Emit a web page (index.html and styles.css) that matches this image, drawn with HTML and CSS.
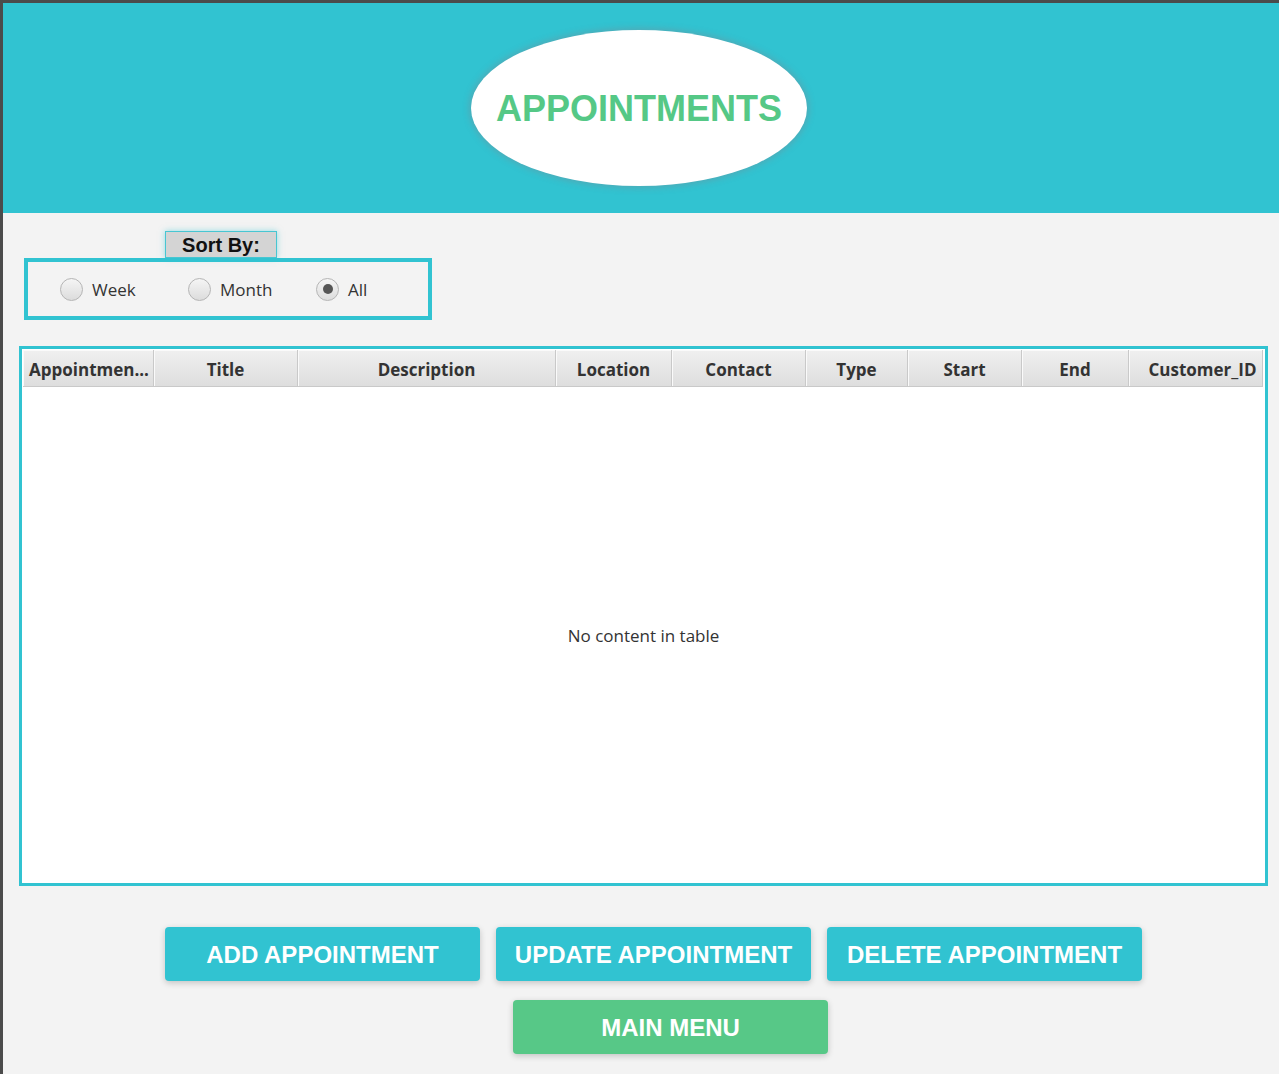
FILE: index.html
```html
<!DOCTYPE html>
<html>
<head>
<meta charset="utf-8">
<link rel="stylesheet" href="styles.css">
</head>
<body>
<div class="frame">
  <header class="header">
    <div class="oval"><h1 class="title">APPOINTMENTS</h1></div>
  </header>
  <section class="sort">
    <div class="sort-label">Sort By:</div>
    <div class="sort-box">
      <label class="radio"><span class="dot"></span><span>Week</span></label>
      <label class="radio"><span class="dot"></span><span>Month</span></label>
      <label class="radio"><span class="dot on"></span><span>All</span></label>
    </div>
  </section>
  <section class="table">
    <div class="thead">
      <div class="th c1">Appointmen...</div>
      <div class="th c2">Title</div>
      <div class="th c3">Description</div>
      <div class="th c4">Location</div>
      <div class="th c5">Contact</div>
      <div class="th c6">Type</div>
      <div class="th c7">Start</div>
      <div class="th c8">End</div>
      <div class="th c9">Customer_ID</div>
    </div>
    <div class="tbody">No content in table</div>
  </section>
  <section class="actions">
    <div class="row">
      <button class="btn teal">ADD APPOINTMENT</button>
      <button class="btn teal">UPDATE APPOINTMENT</button>
      <button class="btn teal">DELETE APPOINTMENT</button>
    </div>
    <div class="row row2">
      <button class="btn green">MAIN MENU</button>
    </div>
  </section>
</div>
</body>
</html>
```
FILE: styles.css
```css
html, body { margin: 0; padding: 0; }
body {
  width: 1279px;
  height: 1074px;
  overflow: hidden;
  background: #4b4b4b;
  font-family: "Open Sans", "Noto Sans", sans-serif;
}
.frame {
  margin: 3px 0 0 3px;
  background: #f3f3f3;
  height: 1071px;
}
.header {
  height: 210px;
  background: #31c3d1;
  display: flex;
  justify-content: center;
  padding-top: 27px;
  box-sizing: border-box;
}
.oval {
  width: 336px;
  height: 156px;
  border-radius: 50%;
  background: #fff;
  box-shadow: 0 0 6px 2px rgba(120,140,150,0.45);
  display: flex;
  align-items: center;
  justify-content: center;
  margin-left: -4px;
}
.title {
  margin: 2px 0 0 0;
  font-family: "Liberation Sans", Arial, sans-serif;
  font-weight: bold;
  font-size: 36px;
  color: #55c886;
}
.sort {
  padding: 18px 0 0 21px;
}
.sort-label {
  margin-left: 141px;
  width: 112px;
  height: 27px;
  box-sizing: border-box;
  background: #d4d4d4;
  border: 1px solid #48c6d2;
  box-shadow: 0 0 6px rgba(49,195,209,0.5);
  font-family: "Liberation Sans", Arial, sans-serif;
  font-weight: bold;
  font-size: 20px;
  color: #111;
  text-align: center;
  line-height: 27px;
}
.sort-box {
  width: 408px;
  height: 62px;
  box-sizing: border-box;
  border: 4px solid #31c3d1;
  display: flex;
  align-items: center;
  padding-left: 32px;
}
.radio {
  display: flex;
  align-items: center;
  width: 128px;
  flex: none;
  font-size: 17px;
  color: #333;
}
.dot {
  width: 23px;
  height: 23px;
  box-sizing: border-box;
  border-radius: 50%;
  border: 1px solid #b5b5b5;
  background: linear-gradient(#f5f5f5, #dcdcdc);
  margin-right: 9px;
  position: relative;
  flex: none;
}
.dot.on::after {
  content: "";
  position: absolute;
  left: 5.5px; top: 5.5px;
  width: 10px; height: 10px;
  border-radius: 50%;
  background: #555;
}
.table {
  margin: 26px 0 0 16px;
  width: 1249px;
  height: 540px;
  box-sizing: border-box;
  border: 3px solid #31c3d1;
  background: #fff;
  display: flex;
  flex-direction: column;
  padding: 1px;
}
.thead {
  display: flex;
  height: 37px;
  flex: none;
}
.th {
  box-sizing: border-box;
  border-right: 1px solid #c9c9c9;
  border-bottom: 1px solid #c9c9c9;
  background: linear-gradient(#f0f0f0, #dedede);
  box-shadow: inset 1px 1px 0 #fafafa;
  display: flex;
  align-items: center;
  justify-content: center;
  font-weight: bold;
  font-size: 17px;
  color: #333;
  white-space: nowrap;
  overflow: hidden;
  padding-top: 2px;
}
.c1 { width: 131px; justify-content: flex-start; padding-left: 6px; }
.c2 { width: 144px; }
.c3 { width: 258px; }
.c4 { width: 116px; }
.c5 { width: 134px; }
.c6 { width: 102px; }
.c7 { width: 114px; }
.c8 { width: 107px; }
.c9 { width: 134px; padding-left: 14px; }
.tbody {
  flex: 1;
  display: flex;
  align-items: center;
  justify-content: center;
  font-size: 17px;
  color: #333;
  padding-top: 2px;
}
.actions {
  padding: 41px 0 0 162px;
}
.row {
  display: flex;
  gap: 16px;
}
.row2 {
  margin-top: 19px;
  padding-left: 348px;
}
.btn {
  width: 315px;
  height: 54px;
  border: none;
  border-radius: 4px;
  color: #fff;
  font-family: "Liberation Sans", Arial, sans-serif;
  font-weight: bold;
  font-size: 24px;
  box-shadow: 0 2px 6px rgba(0,0,0,0.2);
  padding: 2px 0 0 0;
}
.teal { background: #31c3d1; }
.green { background: #57c887; }
```
